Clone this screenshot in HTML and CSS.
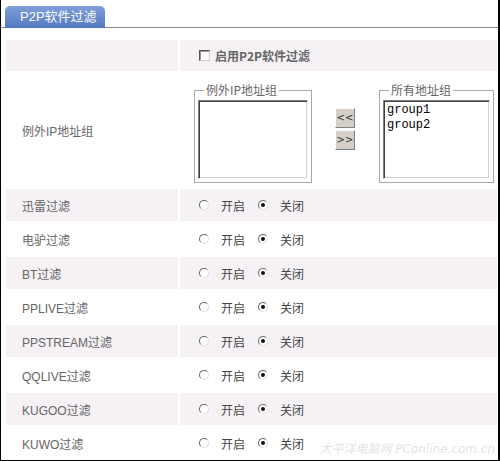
FILE: index.html
```html
<!DOCTYPE html>
<html>
<head>
<meta charset="utf-8">
<link rel="stylesheet" href="styles.css">
</head>
<body>
<div class="frame">
  <div class="header">
    <div class="tab">P2P软件过滤</div>
  </div>
  <div class="grid">
    <div class="cell alt"></div>
    <div class="cell alt right">
      <span class="checkbox"></span><span class="bold">启用P2P软件过滤</span>
    </div>

    <div class="cell label">例外IP地址组</div>
    <div class="cell right groups">
      <fieldset class="fs">
        <legend>例外IP地址组</legend>
        <div class="listbox"></div>
      </fieldset>
      <div class="btns">
        <div class="btn">&lt;&lt;</div>
        <div class="btn">&gt;&gt;</div>
      </div>
      <fieldset class="fs fs2">
        <legend>所有地址组</legend>
        <div class="listbox mono">group1<br>group2</div>
      </fieldset>
    </div>

    <div class="cell label alt">迅雷过滤</div>
    <div class="cell right alt"><span class="radio"></span><span class="opt">开启</span><span class="radio on"></span><span class="opt">关闭</span></div>

    <div class="cell label">电驴过滤</div>
    <div class="cell right"><span class="radio"></span><span class="opt">开启</span><span class="radio on"></span><span class="opt">关闭</span></div>

    <div class="cell label alt">BT过滤</div>
    <div class="cell right alt"><span class="radio"></span><span class="opt">开启</span><span class="radio on"></span><span class="opt">关闭</span></div>

    <div class="cell label">PPLIVE过滤</div>
    <div class="cell right"><span class="radio"></span><span class="opt">开启</span><span class="radio on"></span><span class="opt">关闭</span></div>

    <div class="cell label alt">PPSTREAM过滤</div>
    <div class="cell right alt"><span class="radio"></span><span class="opt">开启</span><span class="radio on"></span><span class="opt">关闭</span></div>

    <div class="cell label">QQLIVE过滤</div>
    <div class="cell right"><span class="radio"></span><span class="opt">开启</span><span class="radio on"></span><span class="opt">关闭</span></div>

    <div class="cell label alt">KUGOO过滤</div>
    <div class="cell right alt"><span class="radio"></span><span class="opt">开启</span><span class="radio on"></span><span class="opt">关闭</span></div>

    <div class="cell label">KUWO过滤</div>
    <div class="cell right"><span class="radio"></span><span class="opt">开启</span><span class="radio on"></span><span class="opt">关闭</span></div>
  </div>
  <div class="watermark">太平洋电脑网 PConline.com.cn</div>
</div>
</body>
</html>
```

FILE: styles.css
```css
html, body {
  margin: 0;
  padding: 0;
  background: #fff;
}
.frame {
  position: relative;
  width: 500px;
  height: 461px;
  box-sizing: border-box;
  border-left: 1px solid #000;
  border-right: 2px solid #000;
  border-bottom: 1px solid #000;
  font-family: "Liberation Sans", "Noto Sans CJK SC", sans-serif;
  font-size: 12px;
  color: #555;
  overflow: hidden;
}
.header {
  height: 28px;
  box-sizing: border-box;
  padding: 6px 0 0 4px;
  border-bottom: 1px solid #7d8894;
}
.tab {
  width: 100px;
  height: 22px;
  box-sizing: border-box;
  border-radius: 5px 5px 0 0;
  background: linear-gradient(#7f9fda, #5479c2);
  color: #fff;
  font-family: "Liberation Sans", "Noto Sans CJK SC", sans-serif;
  font-size: 13px;
  line-height: 22px;
  padding-left: 15px;
}
.grid {
  display: grid;
  grid-template-columns: 172px 1fr;
  grid-template-rows: 31px 114px repeat(8, 32px);
  gap: 2px;
  margin-top: 12px;
  padding: 0 1px 0 5px;
}
.cell {
  display: flex;
  align-items: center;
}
.alt {
  background: #f5f1f5;
}
.label {
  padding-left: 16px;
  font-family: "Liberation Sans", "Noto Sans CJK SC", sans-serif;
  font-size: 12px;
  color: #666;
}
.right {
  padding-left: 19px;
  font-family: "Noto Sans CJK SC", sans-serif;
}
.checkbox {
  width: 11px;
  height: 11px;
  box-sizing: border-box;
  border: 1px solid;
  border-color: #555 #ccc #ccc #555;
  box-shadow: inset 1px 1px #999;
  background: #fff;
  margin-right: 5px;
}
.bold {
  font-weight: bold;
  color: #666;
  font-size: 12px;
}
.radio {
  width: 10px;
  height: 10px;
  box-sizing: border-box;
  border-radius: 50%;
  border: 1px solid;
  border-color: #666 #ddd #ddd #666;
  background: #fff;
  position: relative;
  margin-right: 12px;
}
.radio.on::after {
  content: "";
  position: absolute;
  left: 2px;
  top: 2px;
  width: 4px;
  height: 4px;
  border-radius: 50%;
  background: #111;
}
.opt {
  color: #444;
  font-size: 12px;
  margin-right: 13px;
}
.groups {
  padding-left: 14px;
  align-items: flex-start;
  padding-top: 9px;
}
.fs {
  margin: 0;
  width: 118px;
  box-sizing: border-box;
  border: 1px solid #a8a8a8;
  padding: 2px 3px 3px 3px;
  min-width: 0;
}
.fs legend {
  padding: 0 2px;
  margin-left: 6px;
  line-height: 16px;
  font-size: 12px;
  color: #666;
}
.fs2 {
  width: 115px;
}
.listbox {
  height: 79px;
  box-sizing: border-box;
  border: 1px solid;
  border-color: #808080 #fff #fff #808080;
  box-shadow: inset 1px 1px #404040, inset -1px -1px #d4d0c8;
  background: #fff;
}
.mono {
  font-family: "Liberation Mono", monospace;
  font-size: 12px;
  line-height: 15px;
  color: #000;
  padding: 2px 0 0 3px;
}
.btns {
  display: flex;
  flex-direction: column;
  gap: 2px;
  margin: 26px 24px 0 23px;
}
.btn {
  width: 20px;
  height: 20px;
  box-sizing: border-box;
  background: #d4d0c8;
  border: 1px solid;
  border-color: #fff #808080 #808080 #fff;
  font-family: "DejaVu Sans", sans-serif;
  font-size: 10px;
  line-height: 17px;
  text-align: center;
  color: #333;
}
.watermark {
  position: absolute;
  right: 3px;
  bottom: 4px;
  font-family: "DejaVu Sans", "Noto Sans CJK SC", sans-serif;
  font-size: 12px;
  font-style: italic;
  color: rgba(190, 190, 190, 0.45);
}
```
